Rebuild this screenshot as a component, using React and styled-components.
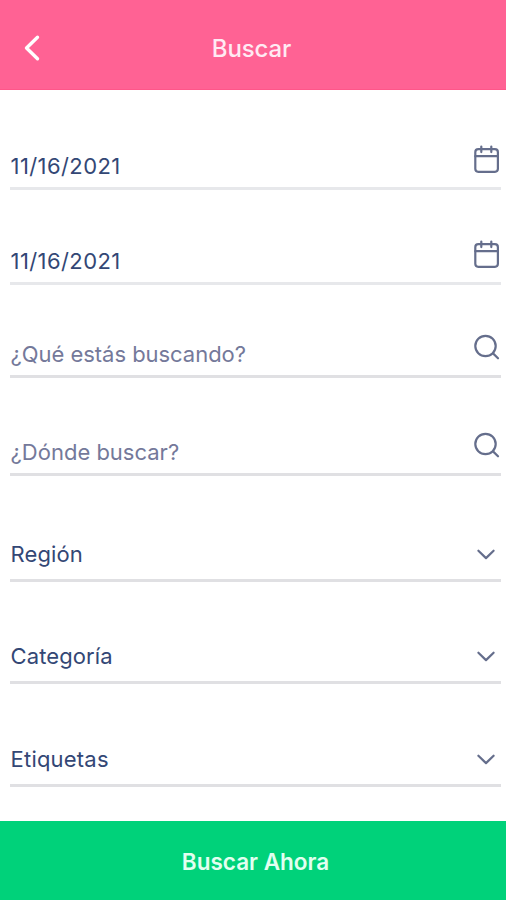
import styled, { createGlobalStyle } from "styled-components";

const campos = [
    { id: "desde", texto: "11/16/2021", tipo: "fecha", alto: 100, espaciado: 0.4 },
    { id: "hasta", texto: "11/16/2021", tipo: "fecha", alto: 95, espaciado: 0.4 },
    { id: "que", texto: "¿Qué estás buscando?", tipo: "busqueda", alto: 93, espaciado: -0.04 },
    { id: "donde", texto: "¿Dónde buscar?", tipo: "busqueda", alto: 98, espaciado: 0 },
    { id: "region", texto: "Región", tipo: "lista", alto: 106, espaciado: 0.1 },
    { id: "categoria", texto: "Categoría", tipo: "lista", alto: 102, espaciado: 0.1 },
    { id: "etiquetas", texto: "Etiquetas", tipo: "lista", alto: 103, espaciado: 0.2 },
];

function IconoCampo({ tipo }) {
    if (tipo === "fecha") {
        return (
            <Icono width="28" height="30" viewBox="0 0 28 30">
                <rect x="3.3" y="4.2" width="22.6" height="22.6" rx="3" />
                <path d="M3.3 11.2h22.6M9.3 1.5v5.6M19.3 1.5v5.6" />
            </Icono>
        );
    }
    if (tipo === "busqueda") {
        return (
            <Icono width="28" height="30" viewBox="0 0 28 30">
                <circle cx="13.5" cy="14" r="10.2" />
                <path d="M21 21.4l5 4.9" />
            </Icono>
        );
    }
    return (
        <Icono width="28" height="30" viewBox="0 0 28 30">
            <path d="M6.4 11.7l7.6 7.4 7.6-7.4" />
        </Icono>
    );
}

function App() {
    return (
        <Pantalla>
            <EstiloGlobal />
            <Encabezado>
                <BotonVolver aria-label="Volver">
                    <svg width="20" height="30" viewBox="0 0 20 30" fill="none" stroke="#fff" strokeWidth="3.4" strokeLinecap="round" strokeLinejoin="round">
                        <path d="M15.5 4.3L4.5 15l11 10.7" />
                    </svg>
                </BotonVolver>
                <Titulo>Buscar</Titulo>
            </Encabezado>
            <Formulario>
                {campos.map(({ id, texto, tipo, alto, espaciado }) => (
                    <Campo key={id} $tipo={tipo} $alto={alto}>
                        <Texto $tipo={tipo} $espaciado={espaciado}>{texto}</Texto>
                        <IconoCampo tipo={tipo} />
                    </Campo>
                ))}
            </Formulario>
            <BotonBuscar>Buscar Ahora</BotonBuscar>
        </Pantalla>
    );
}

const EstiloGlobal = createGlobalStyle`
    * {
        box-sizing: border-box;
    }
    body {
        margin: 0;
        background-color: #fff;
        font-family: Inter, "Liberation Sans", sans-serif;
    }
`;

const Pantalla = styled.div`
    display: flex;
    flex-direction: column;
    height: 900px;
    overflow: hidden;
`;

const Encabezado = styled.header`
    display: grid;
    grid-template-columns: 60px 1fr 60px;
    align-items: center;
    height: 90px;
    padding-top: 6px;
    background-color: #ff6294;
    border-bottom: 1px solid #ff5689;
    flex-shrink: 0;
`;

const BotonVolver = styled.button`
    display: flex;
    margin: 0 0 0 22px;
    padding: 0;
    border: none;
    background: none;
    width: 20px;
    cursor: pointer;
`;

const Titulo = styled.h1`
    margin: 0;
    padding: 2px 3px 0 0;
    text-align: center;
    font-size: 24px;
    font-weight: 500;
    line-height: 30px;
    letter-spacing: -0.1px;
    color: #ffeaf3;
`;

const Formulario = styled.main`
    flex: 1;
    padding: 0 5px 0 10px;
`;

const Campo = styled.div`
    display: flex;
    justify-content: space-between;
    align-items: flex-end;
    height: ${({ $alto }) => $alto}px;
    padding-bottom: ${({ $tipo }) => ($tipo === "lista" ? 10 : 6)}px;
    border-bottom: 3px solid ${({ $tipo }) => ($tipo === "fecha" ? "#e7e8eb" : "#e0e0e3")};

    svg {
        margin-bottom: ${({ $tipo }) => ({ fecha: 6, busqueda: 7, lista: 0 })[$tipo]}px;
    }
`;

const Texto = styled.span`
    padding-left: 0.6px;
    font-size: 22px;
    line-height: 30px;
    letter-spacing: ${({ $espaciado }) => $espaciado}px;
    color: ${({ $tipo }) => ($tipo === "busqueda" ? "#74799a" : "#334775")};
`;

const Icono = styled.svg`
    flex-shrink: 0;
    margin-right: 1px;
    fill: none;
    stroke: #656e8c;
    stroke-width: 2.2;
    stroke-linecap: round;
    stroke-linejoin: round;
`;

const BotonBuscar = styled.button`
    height: 79px;
    padding: 2px 0 0 5px;
    border: none;
    background-color: #00d27a;
    color: #e2fff0;
    font-family: inherit;
    font-size: 22.5px;
    font-weight: 600;
    flex-shrink: 0;
    cursor: pointer;
`;

export default App;
